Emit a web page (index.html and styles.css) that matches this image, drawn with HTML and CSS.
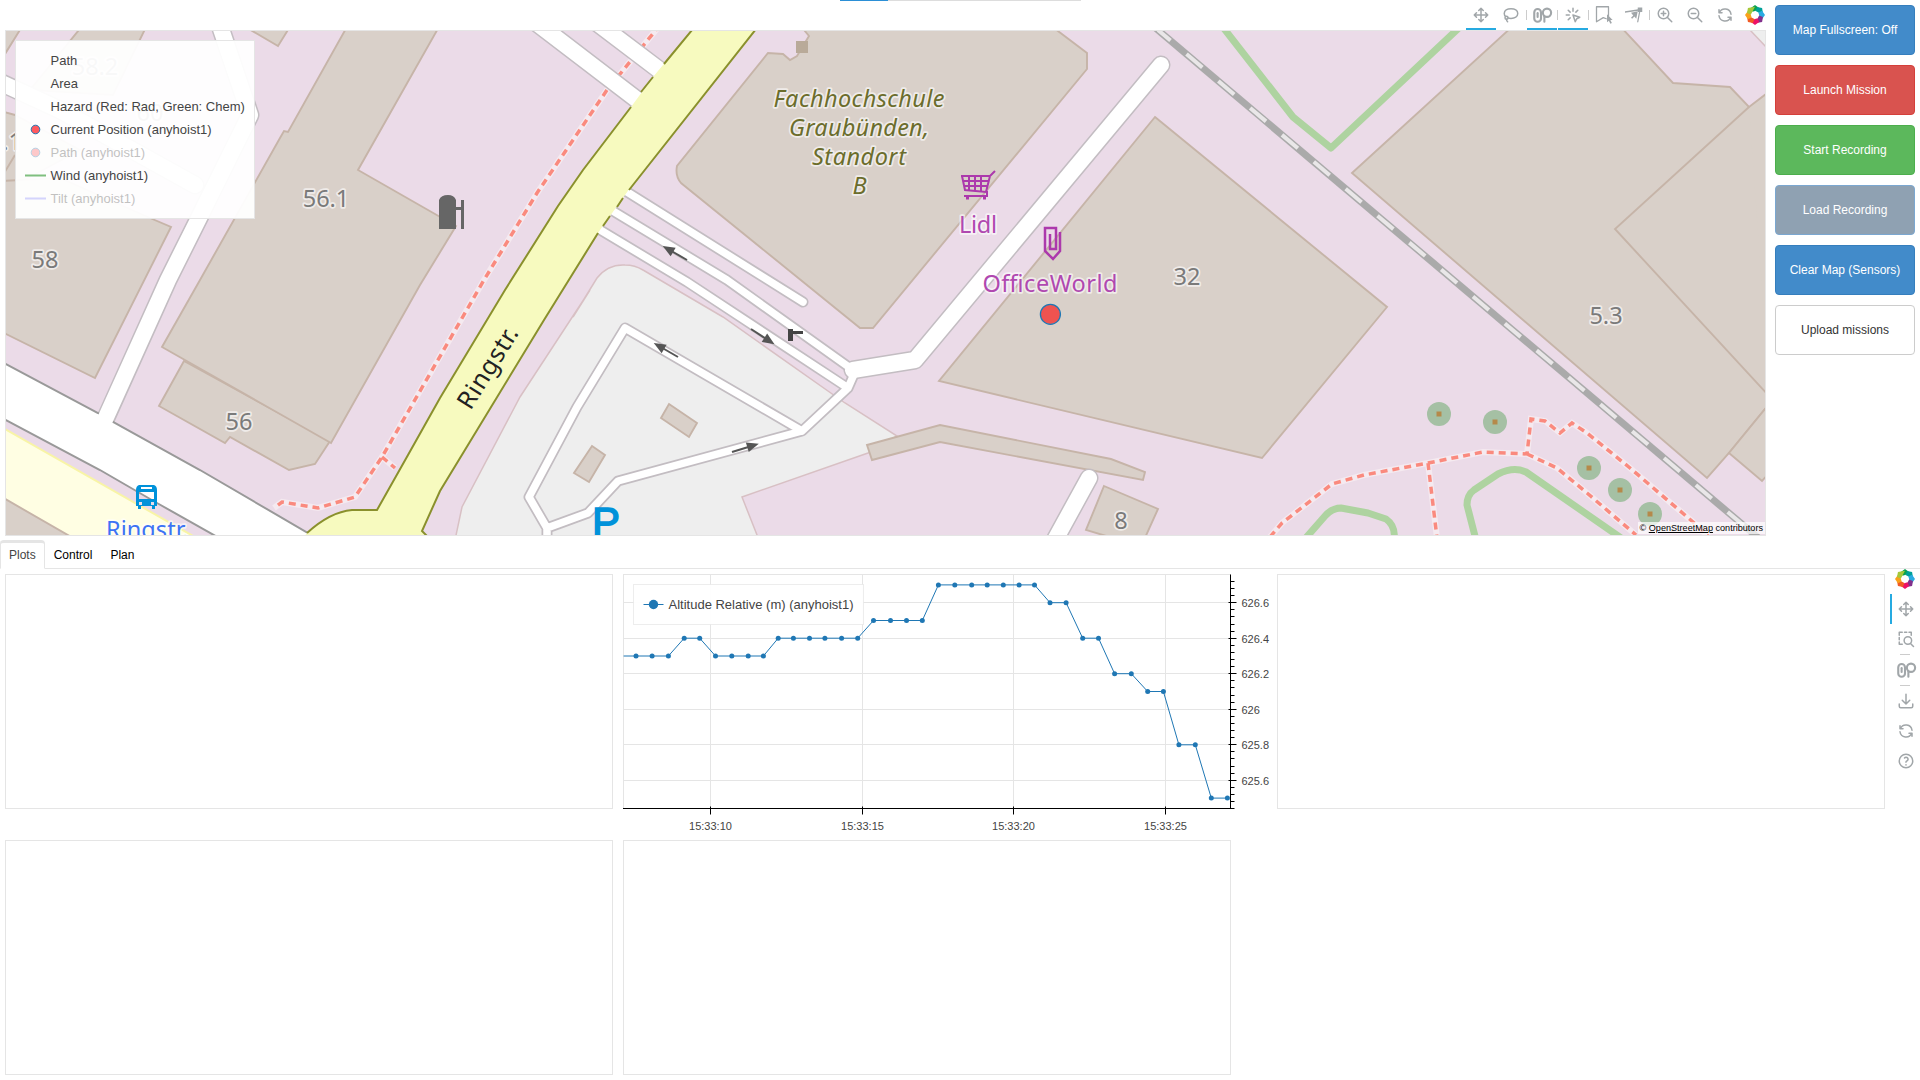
FILE: index.html
```html
<!DOCTYPE html>
<html lang="en">
<head>
<meta charset="utf-8">
<title>Mission dashboard</title>
<link rel="stylesheet" href="styles.css">
</head>
<body>
<svg class="defs" width="0" height="0" aria-hidden="true">
  <defs>
    <symbol id="i-move" viewBox="0 0 24 24"><path d="M18 9l3 3-3 3M15 12h6M6 9l-3 3 3 3M3 12h6M9 18l3 3 3-3M12 15v6M15 6l-3-3-3 3M12 3v6M9 12h6M12 9v6"/></symbol>
    <symbol id="i-lasso" viewBox="0 0 24 24"><path d="M5 14C3.500 13 3 11.500 3 10c0-4 4-6.500 9-6.500s9 2.500 9 6.500-4 6.500-9 6.500c-1.500 0-3-.200-4.200-.700"/><circle cx="6" cy="15.500" r="2"/><path d="M6 17.500c0 1.500.300 2.500 1.500 3.500"/></symbol>
    <symbol id="i-wheel" viewBox="0 0 28 24"><rect x="3" y="4" width="9" height="17" rx="4.500"/><path d="M7.500 9.500v5"/><circle cx="20" cy="9" r="5.500"/><path d="M16.500 13.500V21"/></symbol>
    <symbol id="i-tap" viewBox="0 0 24 24"><path d="M3 12h4M12 3v4M5.600 5.600l2.600 2.600M18.400 5.600l-2.600 2.600M8.200 15.800l-2.600 2.600M12 12l9 3-4 2-2 4z"/></symbol>
    <symbol id="i-poly" viewBox="0 0 24 24"><path d="M2 1h16v13M2 1v20l9-5.500 4 1.500"/><path class="solid" d="M16 11l7.500 7.500-3 .300 2 3.700-2 1-2-3.700-2.500 2z"/></symbol>
    <symbol id="i-edit" viewBox="0 0 24 24"><path d="M0 8l20-3-3 16"/><path class="solid" d="M17 2h6v6h-6zM8 9l9-2-2 10-2.500-3-3 3-1.500-1.500 3-3z"/></symbol>
    <symbol id="i-zin" viewBox="0 0 24 24"><circle cx="10" cy="10" r="7"/><path d="M7 10h6M10 7v6M21 21l-6-6"/></symbol>
    <symbol id="i-zout" viewBox="0 0 24 24"><circle cx="10" cy="10" r="7"/><path d="M7 10h6M21 21l-6-6"/></symbol>
    <symbol id="i-reset" viewBox="0 0 24 24"><path d="M20 11A8.100 8.100 0 0 0 4.500 9M4 5v4h4M4 13a8.100 8.100 0 0 0 15.500 2M20 19v-4h-4"/></symbol>
    <symbol id="i-box" viewBox="0 0 24 24"><path d="M3 7V3h4M10 3h3M16 3h3v4M3 10v3M3 16v3h4"/><circle cx="14.500" cy="14" r="5"/><path d="M18 18l4 4"/></symbol>
    <symbol id="i-save" viewBox="0 0 24 24"><path d="M3 16v3a2 2 0 0 0 2 2h14a2 2 0 0 0 2-2v-3M7 11l5 5 5-5M12 3v13"/></symbol>
    <symbol id="i-help" viewBox="0 0 24 24"><circle cx="12" cy="12" r="9"/><path d="M12 17v.300M12 13.500a1.500 1.500 0 0 1 1-1.500 2.600 2.600 0 1 0-3-4"/></symbol>
    <symbol id="i-logo" viewBox="-12 -12 24 24">
      <path d="M-5-8.500L0-12 7-7-3-4z" fill="#0ba14f"/>
      <path d="M-5-8.500L0-12 7-7-3-4z" fill="#00a19a" transform="rotate(45)"/>
      <path d="M-5-8.500L0-12 7-7-3-4z" fill="#29abe2" transform="rotate(90)"/>
      <path d="M-5-8.500L0-12 7-7-3-4z" fill="#82308c" transform="rotate(135)"/>
      <path d="M-5-8.500L0-12 7-7-3-4z" fill="#ee1166" transform="rotate(180)"/>
      <path d="M-5-8.500L0-12 7-7-3-4z" fill="#f15a24" transform="rotate(225)"/>
      <path d="M-5-8.500L0-12 7-7-3-4z" fill="#f9a11b" transform="rotate(270)"/>
      <path d="M-5-8.500L0-12 7-7-3-4z" fill="#a6c83a" transform="rotate(315)"/>
    </symbol>
    <g id="oneway"><path d="M0 0h18" stroke="#555" stroke-width="2"/><path d="M16-5l12 5-12 5z" fill="#555"/></g>
    <g id="tree"><circle r="12" fill="#a5c0a4"/><rect x="-2.500" y="-2.500" width="5" height="5" fill="#b5894a"/></g>
  </defs>
</svg>

<div class="progress"><span class="progress-value"></span></div>

<main class="page">
  <section class="top">
    <div class="map-col">
      <div class="toolbar">
        <span class="tool active"><svg class="icon"><use href="#i-move"/></svg></span>
        <span class="tool"><svg class="icon"><use href="#i-lasso"/></svg></span>
        <span class="sep"></span>
        <span class="tool active"><svg class="icon wide"><use href="#i-wheel"/></svg></span>
        <span class="sep"></span>
        <span class="tool active"><svg class="icon"><use href="#i-tap"/></svg></span>
        <span class="sep"></span>
        <span class="tool"><svg class="icon thin"><use href="#i-poly"/></svg></span>
        <span class="tool"><svg class="icon thin"><use href="#i-edit"/></svg></span>
        <span class="sep"></span>
        <span class="tool"><svg class="icon"><use href="#i-zin"/></svg></span>
        <span class="tool"><svg class="icon"><use href="#i-zout"/></svg></span>
        <span class="tool"><svg class="icon"><use href="#i-reset"/></svg></span>
        <svg class="logo"><use href="#i-logo"/></svg>
      </div>
      <div class="map">
        <svg class="map-canvas" width="1761" height="506" viewBox="5 30 1761 506">
          <rect x="5" y="30" width="1761" height="506" fill="#ebdbe8"/>
          <!-- parking area -->
          <g class="lot">
            <path d="M455 540L462 507 520 397 590 290 573 317 597 278Q608 264 625 265 635 265 643 270L723 317 845 403 897 436 868 453 742 497 759 540z"/>
            <path d="M1750 30L1766 47V20z"/>
          </g>
          <!-- lower-left verge -->
          <path d="M0 420L220 545H0z" fill="#fffee3" stroke="#f8f4a6" stroke-width="2" transform="translate(-4 4)"/>
          <!-- buildings -->
          <g class="bld">
            <path d="M0 25H23L0 62z"/>
            <path d="M83 25H147L113 95 30 90z"/>
            <path d="M242 25L278 46 291 25z"/>
            <path d="M0 111L15 115 80 150 15 185 0 181z"/>
            <path d="M15 155L0 180"/>
            <path d="M0 181L60 178 150 218 171 227 95 378 0 331z"/>
            <path d="M184 361L159 406 225 443 230 437 289 470 315 464 330 441z"/>
            <path d="M348 25L288 132 284 131 280 138 200 280 162 347 331 443 420 285 456 226 358 170 440 25z"/>
            <path d="M0 496L80 542H0z"/>
            <path d="M800 25L809 36 797 56 790 60 783 54 768 53 677 166Q675 176 681 183L860 328H873L1087 69V53L1050 25z"/>
            <path d="M1155 117L1387 307 1262 458 939 381z"/>
            <path d="M669 404L697 423 689 437 661 418z"/>
            <path d="M592 446L605 455 589 482 574 473z"/>
            <path d="M867 445L940 425 1111 459 1145 472 1143 480 940 442 872 460z"/>
            <path d="M1104 486L1158 509 1144 540H1120L1086 530z"/>
            <path d="M1514 25L1352 173 1707 478 1729 453 1770 403V91L1749 107 1730 87 1673 83 1619 25z"/>
            <path d="M1749 107L1615 229 1770 397"/>
            <path d="M1729 453L1762 481 1770 472V403z"/>
          </g>
          <rect x="796" y="41" width="12" height="12" fill="#b9aa99"/>
          <!-- hedges -->
          <g class="hedge">
            <path d="M1222 26L1293 117 1331 148 1462 25"/>
            <path d="M1304 540L1325 516Q1332 508 1341 508L1368 513 1386 519Q1396 526 1394 540"/>
            <path d="M1476 540L1467 505Q1467 495 1474 490L1498 474Q1514 466 1526 472L1624 540"/>
          </g>
          <!-- foot paths -->
          <g class="foot-halo">
            <path d="M660 25L607 90 537 193 484 280 382 457 355 497 318 508 282 502 274 508M382 457L395 468"/>
            <path d="M1270 537L1282 523 1332 484 1364 475 1428 463 1483 452 1527 454 1531 419 1545 421 1560 433 1572 423 1587 433 1630 468 1693 522 1712 540M1527 454L1557 468 1587 493 1636 535M1428 463L1437 538"/>
          </g>
          <g class="foot">
            <path d="M660 25L607 90 537 193 484 280 382 457 355 497 318 508 282 502 274 508M382 457L395 468"/>
            <path d="M1270 537L1282 523 1332 484 1364 475 1428 463 1483 452 1527 454 1531 419 1545 421 1560 433 1572 423 1587 433 1630 468 1693 522 1712 540M1527 454L1557 468 1587 493 1636 535M1428 463L1437 538"/>
          </g>
          <!-- service roads: casing below, carriageway above -->
          <g class="case">
            <path class="w17" d="M218 20L250 115 199 218 168 280 105 420M-5 80L60 110 195 185M538 24L640 102M596 22L662 72M915 360L1161 65M853 370L915 360M1089 478L1055 540"/>
            <path class="w8" d="M624 190L803 302M608 208L727 280 853 370M592 225L687 282 848 388M547 545V528L529 497 577 407 625 328 802 431 618 481 588 513 547 528M802 431L848 388 855 372"/>
          </g>
          <path d="M0 361L98 413 113 422 200 470 325 543H228L157 503 100 470 0 417z" fill="#fff" stroke="#999" stroke-width="2"/>
          <g class="fill">
            <path class="w17" d="M218 20L250 115 199 218 168 280 103 424M-5 80L60 110 195 185M538 24L640 102M596 22L662 72M915 360L1161 65M853 370L915 360M1089 478L1055 540"/>
            <path class="w8" d="M624 190L803 302M608 208L727 280 853 370M592 225L687 282 848 388M547 545V528L529 497 577 407 625 328 802 431 618 481 588 513 547 528M802 431L848 388 855 372"/>
          </g>
          <!-- main street -->
          <path d="M697 24L653 77 631 107 583 170 558 206 505 290 440 398 408 455 377 510H352Q330 512 307 533L300 542H428L422 531 440 491 544 320 600 230 630 188 760 24z" fill="#f7fabf"/>
          <path d="M697 24L664 64M653 77L641 92M631 107L583 170 558 206 505 290 440 398 408 455 377 510H352Q330 512 307 533M428 537L422 531 440 491 544 320 598 233M603 226L610 216M617 207L623 198M629 190L760 24" fill="none" stroke="#8a902c" stroke-width="2"/>
          <!-- railway -->
          <path d="M1152 25L1762 541" stroke="#aaa" stroke-width="7"/>
          <path d="M1158 30L1762 541" stroke="#e9e7e8" stroke-width="4" stroke-dasharray="20.800 20.900" stroke-dashoffset="4.400"/>
          <use href="#tree" x="1439" y="414"/><use href="#tree" x="1495" y="422"/><use href="#tree" x="1589" y="468"/><use href="#tree" x="1620" y="490"/><use href="#tree" x="1650" y="514"/>
          <use href="#oneway" transform="translate(687 260) rotate(210)"/>
          <use href="#oneway" transform="translate(751 329) rotate(33)"/>
          <use href="#oneway" transform="translate(678 357) rotate(210)"/>
          <use href="#oneway" transform="translate(732 452) rotate(-17)"/>
          <path d="M788 329h5v12h-5zM793 331h10v3h-10z" fill="#444"/>
          <!-- fuel storage -->
          <path d="M439 229V200Q441 195 448 195 454 195 456 200V207H461V200H464V229H461V210H456V229z" fill="#666"/>
          <!-- bus stop -->
          <path fill="#0092da" fill-rule="evenodd" d="M139 485H154Q157 486 157 490V506H155V509H152V506H141V509H138V506H136V490Q136 486 139 485zM141 487V489H152V487zM139 492V499H154V492zM139 502v3h3v-3zM151 502v3h3v-3z"/>
          <!-- supermarket -->
          <g fill="none" stroke="#ac39ac" stroke-width="2"><path d="M961 176H990L995 171M962 176L965 190 986 192 990 176M964 181H988M965 186H987M969 176V190M975 176V190M981 176V191M987 191V196H964"/><path d="M966 198h3M983 198h3" stroke-width="3"/></g>
          <path d="M1060 232V251L1053 259 1045 251V228H1056V249H1050V234" fill="none" stroke="#ac39ac" stroke-width="2.500"/>
          <!-- labels -->
          <g class="label num">
            <text x="95" y="75">58.2</text><text x="150" y="121">60</text><text x="12" y="150">.1</text>
            <text x="326" y="207">56.1</text><text x="45" y="268">58</text><text x="239" y="430">56</text>
            <text x="1187" y="285">32</text><text x="1606" y="324">5.3</text><text x="1121" y="529">8</text>
          </g>
          <g class="label campus">
            <text x="859" y="107" textLength="171">Fachhochschule</text><text x="859" y="136" textLength="140">Graubünden,</text><text x="859" y="165" textLength="94">Standort</text><text x="859.500" y="194">B</text>
          </g>
          <g class="label shop"><text x="978" y="233" textLength="38">Lidl</text><text x="1050" y="292" textLength="135">OfficeWorld</text></g>
          <text class="label stop" x="147" y="538" textLength="82">Ringstr.</text>
          <text class="label street" transform="translate(495 372) rotate(-58)" textLength="92">Ringstr.</text>
          <text x="592" y="537" class="parking">P</text>
          <circle cx="1050.400" cy="314.300" r="10" fill="#ef5350" stroke="#1f77b4" stroke-width="1.300"/>
          <!-- legend -->
          <g class="legend">
            <rect x="15.500" y="40.500" width="239" height="178"/>
            <text x="50.500" y="64.500">Path</text>
            <text x="50.500" y="87.500">Area</text>
            <text x="50.500" y="111">Hazard (Red: Rad, Green: Chem)</text>
            <text x="50.500" y="134">Current Position (anyhoist1)</text>
            <text x="50.500" y="180">Wind (anyhoist1)</text>
            <circle cx="35.500" cy="129.500" r="4.300" fill="#ff5a5f" stroke="#1f77b4"/>
            <path d="M25 175.500H46" stroke="#7fbf7f" stroke-width="2"/>
            <g opacity=".32"><text x="50.500" y="157">Path (anyhoist1)</text><text x="50.500" y="203">Tilt (anyhoist1)</text>
              <circle cx="35.500" cy="152.500" r="4.300" fill="#ff5a5f" stroke="#1f77b4"/><path d="M25 198.500H46" stroke="#8080ff" stroke-width="2"/></g>
          </g>
        </svg>
        <div class="attribution">© <u>OpenStreetMap</u> contributors</div>
      </div>
    </div>
    <div class="actions">
      <button class="btn primary">Map Fullscreen: Off</button>
      <button class="btn danger">Launch Mission</button>
      <button class="btn success">Start Recording</button>
      <button class="btn disabled">Load Recording</button>
      <button class="btn primary">Clear Map (Sensors)</button>
      <button class="btn plain">Upload missions</button>
    </div>
  </section>

  <nav class="tabs">
    <span class="tab selected">Plots</span><span class="tab">Control</span><span class="tab">Plan</span>
  </nav>

  <section class="plots">
    <div class="grid">
      <div class="plot"></div>
      <svg id="altitude" class="chart" width="656" height="266" viewBox="623 574 656 266"></svg>
      <div class="plot"></div>
      <div class="plot"></div>
      <div class="plot"></div>
    </div>
    <div class="side-tools">
      <svg class="logo"><use href="#i-logo"/></svg>
      <span class="tool active"><svg class="icon"><use href="#i-move"/></svg></span>
      <span class="tool"><svg class="icon"><use href="#i-box"/></svg></span>
      <span class="sep"></span>
      <span class="tool"><svg class="icon wide"><use href="#i-wheel"/></svg></span>
      <span class="sep"></span>
      <span class="tool"><svg class="icon"><use href="#i-save"/></svg></span>
      <span class="tool"><svg class="icon"><use href="#i-reset"/></svg></span>
      <span class="tool"><svg class="icon"><use href="#i-help"/></svg></span>
    </div>
  </section>
</main>
<script src="chart.js"></script>
</body>
</html>
```
FILE: styles.css
```css
* { box-sizing: border-box; }
body {
  margin: 0;
  background: #fff;
  font-family: "Liberation Sans", Arial, Helvetica, sans-serif;
  font-size: 12px;
  height: 1080px;
  overflow: hidden;
}
.defs { position: absolute; }

.progress {
  position: absolute;
  top: 0;
  left: 840px;
  width: 241px;
  height: 1px;
  background: #ddd;
}
.progress-value { display: block; width: 48px; height: 1px; background: #2b8fd6; }

.page { display: flex; flex-direction: column; height: 1080px; }
.top { display: flex; gap: 9px; height: 540px; padding-left: 5px; }
.map-col { width: 1761px; }

.toolbar { display: flex; justify-content: flex-end; align-items: center; height: 30px; padding-right: 1px; }
.toolbar .logo { margin-left: 5px; }
.tool { display: flex; align-items: center; justify-content: center; width: 30px; height: 30px; }
.toolbar .tool { border-bottom: 2px solid transparent; padding-top: 2px; }
.toolbar .active { border-bottom-color: #26aae1; }
.toolbar .sep { width: 1px; height: 10px; background: #ccc; }
.icon { width: 18px; height: 18px; fill: none; stroke: #a1a6a9; stroke-width: 2; stroke-linecap: round; stroke-linejoin: round; overflow: visible; }
.icon.wide { width: 21px; stroke-width: 2.800; }
.icon.thin { stroke-width: 1.700; }
.solid { fill: #a1a6a9; stroke: none; }
.logo { width: 20px; height: 20px; }

.map { position: relative; height: 506px; border: 1px solid #e5e5e5; overflow: hidden; }
.map-canvas { display: block; margin: -1px; }
.lot path { fill: #eee; stroke: #d8c0c4; stroke-width: 1.500; }
.bld path { fill: #d9d0c9; stroke: #c6b4a8; stroke-width: 1.900; }
.hedge path { fill: none; stroke: #aed3a0; stroke-width: 7; stroke-linejoin: round; }
.foot path { fill: none; stroke: #fa8a7e; stroke-width: 3.500; stroke-dasharray: 7 5; }
.foot-halo path { fill: none; stroke: #f5eaf0; stroke-width: 6; }
.case path, .fill path { fill: none; stroke-linecap: round; stroke-linejoin: round; }
.case path { stroke: #c3bdc2; }
.fill path { stroke: #fff; }
.case .w17 { stroke-width: 19px; }
.fill .w17 { stroke-width: 16px; }
.case .w8 { stroke-width: 11px; }
.fill .w8 { stroke-width: 7.500px; }

.label { font-family: "Noto Sans", sans-serif; font-size: 23.500px; text-anchor: middle; paint-order: stroke; stroke: rgba(255, 255, 255, .6); stroke-width: 3.500px; stroke-linejoin: round; }
.num { fill: #7a7a7a; }
.campus { fill: #6b6d2c; font-style: italic; }
.shop { fill: #b048b0; }
.stop { fill: #3d73f5; }
.street { fill: #222; stroke: none; font-size: 25px; }
.parking { font-family: "Liberation Sans", sans-serif; font-size: 42px; fill: #0092da; stroke: #0092da; stroke-width: 1.500px; }

.legend rect { fill: #fff; fill-opacity: .95; stroke: #e5e5e5; }
.legend text { font-size: 13px; fill: #444; }

.attribution {
  position: absolute;
  right: 0;
  bottom: 1px;
  padding: 1px 2px;
  background: rgba(255, 255, 255, .7);
  color: #000;
  font-size: 9.100px;
  line-height: 10px;
}

.actions { display: flex; flex-direction: column; gap: 10px; width: 140px; padding-top: 5px; }
.btn { height: 50px; border: 1px solid; border-radius: 4px; color: #fff; font: 12px "Liberation Sans", Arial, sans-serif; padding: 0; flex: none; }
.primary { background: #428bca; border-color: #357ebd; }
.danger { background: #d9534f; border-color: #d43f3a; }
.success { background: #5cb85c; border-color: #4cae4c; }
.disabled { background: #8fa1b2; border-color: #7ba7d0; }
.plain { background: #fff; border-color: #ccc; color: #333; }

.tabs { display: flex; height: 29px; border-bottom: 1px solid #e5e5e5; }
.tab { height: 29px; padding: 6px 8px 3px; border: 1px solid transparent; line-height: 17px; color: #000; }
.tab.selected { border-color: #e5e5e5; border-top-width: 3px; border-bottom-color: #fff; border-radius: 4px 4px 0 0; padding-top: 4px; color: #444; background: #fff; }

.plots { display: flex; flex: 1; padding: 5px 0 0 5px; justify-content: space-between; }
.grid { display: grid; grid-template-columns: 608px 644px 608px; grid-template-rows: 266px 235px; column-gap: 10px; height: 501px; width: 1880px; }
.plot { width: 608px; height: 235px; border: 1px solid #e5e5e5; }
.chart { display: block; overflow: visible; }
.grid-line { stroke: #e5e5e5; }
.axis { stroke: #000; }
.series { fill: none; stroke: #1f77b4; }
.dot { fill: #1f77b4; }
.tick-label { font-size: 11px; fill: #444; }
.series-label { font-size: 13px; fill: #444; }
.series-box { fill: #fff; fill-opacity: .95; stroke: #e5e5e5; stroke-opacity: .7; }

.side-tools { display: flex; flex-direction: column; align-items: center; width: 30px; margin-top: -5px; flex: none; }
.side-tools .logo { flex: none; margin-bottom: 5px; }
.side-tools .tool { width: 30px; height: 30px; border-left: 2px solid transparent; flex: none; }
.side-tools .active { border-left-color: #26aae1; }
.side-tools .sep { width: 10px; height: 1px; background: #ccc; flex: none; }
```
FILE: chart.js
```js
const NS = "http://www.w3.org/2000/svg";
const svg = document.getElementById("altitude");
const add = (tag, attrs, text) => {
  const el = document.createElementNS(NS, tag);
  for (const k in attrs) el.setAttribute(k, attrs[k]);
  if (text) el.textContent = text;
  svg.appendChild(el);
};
// seconds after 15:33:00 and altitude in metres
const xOf = t => 710.6 + (t - 10) * 30.33;
const yOf = v => 602.7 + (626.6 - v) * 177.6;
const data = [[7.13,626.3],[7.54,626.3],[8.07,626.3],[8.61,626.3],[9.13,626.4],[9.64,626.4],[10.16,626.3],[10.7,626.3],[11.24,626.3],[11.74,626.3],
[12.23,626.4],[12.73,626.4],[13.26,626.4],[13.77,626.4],[14.32,626.4],[14.85,626.4],[15.37,626.5],[15.93,626.5],[16.46,626.5],[16.98,626.5],
[17.51,626.7],[18.05,626.7],[18.61,626.7],[19.12,626.7],[19.65,626.7],[20.17,626.7],[20.68,626.7],[21.19,626.6],[21.72,626.6],[22.27,626.4],[22.79,626.4],
[23.32,626.2],[23.87,626.2],[24.41,626.1],[24.93,626.1],[25.44,625.8],[25.98,625.8],[26.51,625.5],[27.04,625.5]];

const snap = n => Math.floor(n) + 0.5;
add("rect", {x: 623.5, y: 574.5, width: 607, height: 234, fill: "none", class: "grid-line"});
[10, 15, 20, 25].forEach(t => {
  const x = snap(xOf(t));
  add("path", {d: `M${x} 575V808`, class: "grid-line"});
  add("path", {d: `M${x} 806.5V814.5`, class: "axis"});
  add("text", {x, y: 830, "text-anchor": "middle", class: "tick-label"}, "15:33:" + t);
});
[626.6, 626.4, 626.2, 626, 625.8, 625.6].forEach(v => {
  const y = snap(yOf(v));
  add("path", {d: `M624 ${y}H1230`, class: "grid-line"});
  add("path", {d: `M1228.5 ${y}H1236.5`, class: "axis"});
  add("text", {x: 1241.5, y: y + 4, class: "tick-label"}, String(v));
});
for (let i = -3; i <= 28; i++) {
  const y = snap(602.7 + i * 7.104);
  if (y < 808) add("path", {d: `M1230.5 ${y}H1234.5`, class: "axis"});
}
add("path", {d: "M623 808.5H1234.5M1230.5 574.5V809", class: "axis"});
add("path", {d: "M" + data.map(([t, v]) => `${xOf(t).toFixed(1)} ${yOf(v).toFixed(1)}`).join("L"), class: "series"});
data.slice(1).forEach(([t, v]) => add("circle", {cx: xOf(t).toFixed(1), cy: yOf(v).toFixed(1), r: 2.5, class: "dot"}));
add("rect", {x: 633.5, y: 584.5, width: 230, height: 40, class: "series-box"});
add("path", {d: "M643.5 604.5H663.5", class: "series"});
add("circle", {cx: 653.5, cy: 604.5, r: 4.7, class: "dot"});
add("text", {x: 668.5, y: 609, class: "series-label"}, "Altitude Relative (m) (anyhoist1)");
```
